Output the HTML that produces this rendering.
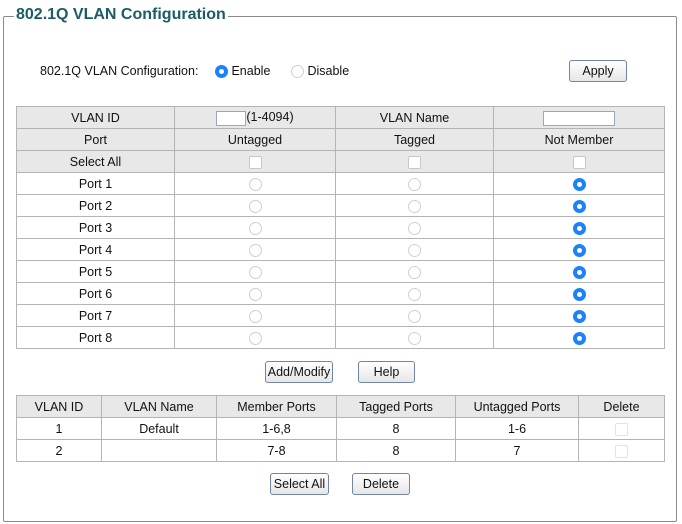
<!DOCTYPE html><html><head><style>
body{margin:0;width:682px;height:524px;background:#fff;font-family:"Liberation Sans",Arial,sans-serif;font-size:12px;color:#111;position:relative;overflow:hidden}
.fs{position:absolute;left:3px;top:16px;width:672px;height:504px;border:1px solid #8a8a8a;border-radius:2px}
.lg{position:absolute;left:14px;top:6px;background:#fff;padding:0 2px;color:#1b5c66;font-weight:bold;font-size:16px}
.a{position:absolute;font-size:12.5px}
table{position:absolute;border-collapse:collapse;table-layout:fixed}
td{border:1px solid #b4b4b4;height:21px;padding:1px 0 0 0;box-sizing:border-box;text-align:center;font-size:12.5px}
tr.g td{background:#e8e8e8}
.r{display:inline-block;width:11px;height:11px;border:1px solid #d0d0d0;border-radius:50%;vertical-align:middle;background:#fff}
.rc{display:inline-block;width:13px;height:13px;border-radius:50%;background:#1b82fb;vertical-align:middle;position:relative}
.rc:after{content:"";position:absolute;left:4px;top:4px;width:5px;height:5px;border-radius:50%;background:#fff}
.c{display:inline-block;width:11px;height:11px;border:1px solid #c8c8c8;border-radius:2px;background:#fff;vertical-align:middle}
.b{position:absolute;border:1px solid #6f86a8;border-radius:3px;background:linear-gradient(#fff,#e6e6e6);font-size:12.5px;text-align:center;line-height:20px;box-sizing:border-box;height:22px}
.in{display:inline-block;background:#fff;border:1px solid #9aa8bb;height:13px;vertical-align:middle}
</style></head><body>
<div class="fs"></div>
<div class="lg">802.1Q VLAN Configuration</div>
<div class="a" style="left:40px;top:64px">802.1Q VLAN Configuration:</div>
<div class="a" style="left:215px;top:64px"><span class="rc"></span> Enable</div>
<div class="a" style="left:291px;top:64px"><span class="r"></span> Disable</div>
<div class="b" style="left:569px;top:60px;width:58px">Apply</div>
<table style="left:16px;top:106px;width:649px">
<col style="width:158px"><col style="width:161px"><col style="width:158px"><col style="width:171px">
<tr class="g"><td style="height:22px">VLAN ID</td><td><span class="in" style="width:28px"></span>(1-4094)</td><td>VLAN Name</td><td><span class="in" style="width:70px"></span></td></tr>
<tr class="g"><td style="height:22px">Port</td><td>Untagged</td><td>Tagged</td><td>Not Member</td></tr>
<tr class="g"><td style="height:22px">Select All</td><td><span class="c"></span></td><td><span class="c"></span></td><td><span class="c"></span></td></tr>
<tr><td style="height:22px">Port 1</td><td><span class="r"></span></td><td><span class="r"></span></td><td><span class="rc"></span></td></tr>
<tr><td style="height:22px">Port 2</td><td><span class="r"></span></td><td><span class="r"></span></td><td><span class="rc"></span></td></tr>
<tr><td style="height:22px">Port 3</td><td><span class="r"></span></td><td><span class="r"></span></td><td><span class="rc"></span></td></tr>
<tr><td style="height:22px">Port 4</td><td><span class="r"></span></td><td><span class="r"></span></td><td><span class="rc"></span></td></tr>
<tr><td style="height:22px">Port 5</td><td><span class="r"></span></td><td><span class="r"></span></td><td><span class="rc"></span></td></tr>
<tr><td style="height:22px">Port 6</td><td><span class="r"></span></td><td><span class="r"></span></td><td><span class="rc"></span></td></tr>
<tr><td style="height:22px">Port 7</td><td><span class="r"></span></td><td><span class="r"></span></td><td><span class="rc"></span></td></tr>
<tr><td style="height:22px">Port 8</td><td><span class="r"></span></td><td><span class="r"></span></td><td><span class="rc"></span></td></tr>
</table>
<div class="b" style="left:265px;top:361px;width:68px">Add/Modify</div>
<div class="b" style="left:358px;top:361px;width:57px">Help</div>
<table style="left:16px;top:395px;width:649px">
<col style="width:85px"><col style="width:115px"><col style="width:120px"><col style="width:119px"><col style="width:123px"><col style="width:86px">
<tr class="g"><td style="height:22px">VLAN ID</td><td>VLAN Name</td><td>Member Ports</td><td>Tagged Ports</td><td>Untagged Ports</td><td>Delete</td></tr>
<tr><td style="height:22px">1</td><td>Default</td><td>1-6,8</td><td>8</td><td>1-6</td><td><span class="c" style="border-color:#e2e2e2"></span></td></tr>
<tr><td style="height:22px">2</td><td></td><td>7-8</td><td>8</td><td>7</td><td><span class="c" style="border-color:#e2e2e2"></span></td></tr>
</table>
<div class="b" style="left:270px;top:473px;width:59px">Select All</div>
<div class="b" style="left:352px;top:473px;width:58px">Delete</div>
</body></html>
